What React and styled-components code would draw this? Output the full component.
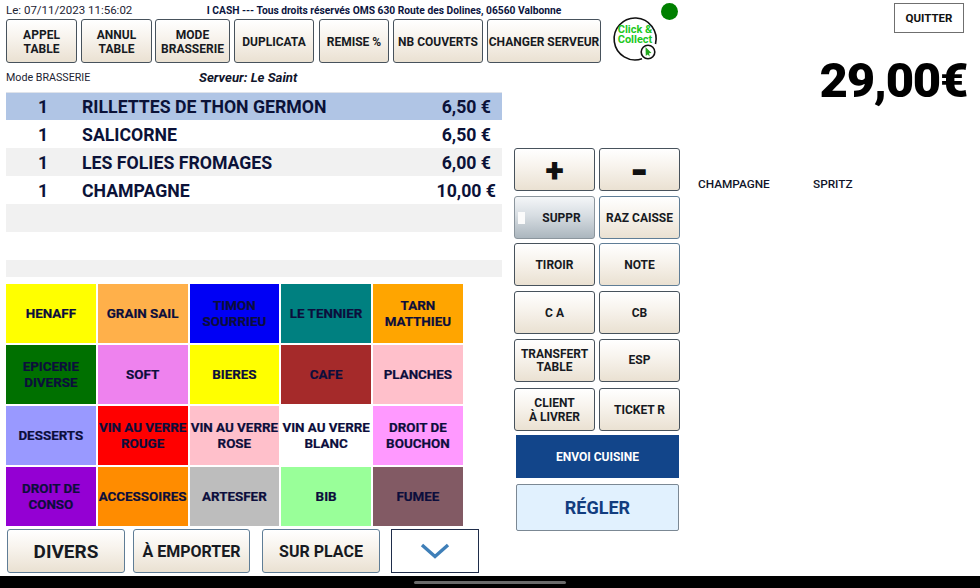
import React from 'react';
import styled, { createGlobalStyle } from 'styled-components';

const Global = createGlobalStyle`
  html, body { margin: 0; padding: 0; background: #fff; }
  * { box-sizing: border-box; }
  body { font-family: Roboto, "Liberation Sans", sans-serif; color: #0b1033; }
`;

const Page = styled.div`
  width: 980px; height: 588px; display: flex; flex-direction: column; overflow: hidden; background: #fff;
`;
const Screen = styled.div`
  height: 576px; display: flex;
`;
const Main = styled.div`
  width: 690px; display: flex; flex-direction: column;
`;
const Head = styled.div`
  height: 19px; display: flex; align-items: center; padding-left: 6px;
`;
const Stamp = styled.div`
  width: 200px; font-size: 11.5px; color: #1c2333;
`;
const Legal = styled.div`
  width: 356px; text-align: center; font-size: 10.25px; font-weight: 700; color: #0b1440; padding-top: 1px; white-space: nowrap;
`;
const Dot = styled.div`
  width: 17px; height: 17px; border-radius: 50%; background: #008000; margin-left: 99px; margin-top: 4px;
`;
const Tools = styled.div`
  height: 44px; display: flex; padding-left: 6px; align-items: flex-start;
`;
const Btn = styled.button`
  display: flex; align-items: center; justify-content: center; text-align: center; padding: ${p => p.$pt || 0}px 0 0;
  font-family: Roboto, sans-serif; font-weight: 700; color: #171a22; line-height: 13.5px;
  font-size: ${p => p.$fs || 12}px;
  width: ${p => p.$w}px; height: ${p => p.$h || 44}px;
  margin-right: ${p => p.$mr || 0}px;
  border: 1.5px solid ${p => p.$edge || '#47525c'}; border-radius: 3px;
  background: linear-gradient(180deg, #ffffff 0%, #f8f4ee 40%, #eae1d2 100%);
  white-space: pre-line; flex: none;
`;
const Symbol = styled(Btn)`
  font-weight: 900; color: #111;
`;
const Logo = styled.svg`
  width: 46px; height: 48px; margin-left: 11px; margin-top: -4px; flex: none; overflow: visible;
`;
const ModeRow = styled.div`
  height: 29px; display: flex; align-items: center; padding: 0 0 0 6px;
`;
const ModeText = styled.div`
  width: 193px; font-size: 10.7px; color: #1c2333;
`;
const Server = styled.div`
  font-size: 13.2px; font-weight: 700; font-style: italic; color: #10142a;
`;
const Body = styled.div`
  flex: 1; display: flex; min-height: 0;
`;
const Left = styled.div`
  width: 508px; padding-left: 6px; display: flex; flex-direction: column;
`;
const List = styled.div`
  width: 496px; height: 185px; display: flex; flex-direction: column; overflow: hidden;
`;
const Row = styled.div`
  height: ${p => p.$h || 28}px; flex: none; display: flex; align-items: center; background: ${p => p.$bg};
  padding-top: ${p => p.$sel ? 1 : 2}px;
  font-size: 17.7px; font-weight: 700; color: #0b1238; border-top: ${p => p.$sel ? '1px solid #dfe3ea' : '0'};
`;
const Qty = styled.div` width: 76px; padding-left: 32px; `;
const Name = styled.div` flex: 1; `;
const Price = styled.div` padding-right: ${p => p.$pr}px; `;
const Tiles = styled.div`
  margin-top: 7px; display: grid; grid-template-columns: repeat(5, 89.75px); grid-auto-rows: 59px; gap: 2px;
`;
const Tile = styled.div`
  background: ${p => p.$bg}; display: flex; align-items: center; justify-content: center; text-align: center;
  font-size: 13.4px; font-weight: 700; line-height: 16px; color: #0c0e3c; white-space: pre;
  -webkit-text-stroke: 0.2px #0c0e3c;
`;
const Bottom = styled.div`
  margin-top: 3px; display: flex; padding-left: 1px;
`;
const Arrow = styled.button`
  width: 88px; height: 44px; margin-left: 11px; border: 1px solid #1f2d4a; background: #fff; padding: 0;
  display: flex; align-items: center; justify-content: center;
`;
const Mid = styled.div`
  margin: 56px 0 0 6px; width: 170px; display: flex; flex-direction: column;
`;
const Pair = styled.div`
  display: flex; gap: 4px; margin-bottom: ${p => p.$mb}px;
`;
const Suppr = styled(Btn)`
  position: relative; padding-left: 14px; background: linear-gradient(180deg, #f4f6f8 0%, #d7dde2 45%, #abb6be 100%); border-color: #8b959d;
`;
const Chip = styled.span`
  position: absolute; left: 3px; top: 15px; width: 7px; height: 12px; background: #fbfbfb;
`;
const Send = styled.div`
  margin: 0 0 6px 2px; width: 163px; height: 43px; background: #12458a; color: #fff; font-size: 12px; font-weight: 700;
  display: flex; align-items: center; justify-content: center;
`;
const Pay = styled.div`
  margin-left: 2px; width: 163px; height: 47px; background: #e1f1fe; border: 1px solid #7b8894; border-radius: 2px;
  color: #123d7f; font-size: 18px; font-weight: 700; display: flex; align-items: center; justify-content: center;
`;
const Side = styled.div`
  flex: 1; display: flex; flex-direction: column; align-items: flex-end; padding: 3px 16px 0 0;
`;
const Quit = styled.button`
  width: 70px; height: 30px; background: #fff; border: 1px solid #6f6f6f; font-family: Roboto, sans-serif; font-size: 11.5px; font-weight: 700; color: #111; padding: 0;
`;
const Total = styled.div`
  margin-top: 16px; margin-right: -3px; font-size: 49px; font-weight: 900; line-height: 64px; color: #000; letter-spacing: -1.3px;
`;
const Favs = styled.div`
  margin-top: 64px; align-self: flex-start; display: flex; padding-left: 8px; font-size: 11.8px; font-weight: 500; color: #10142a;
`;
const Fav = styled.div` width: 115px; `;
const Nav = styled.div`
  height: 12px; background: #000; display: flex; justify-content: center; padding-top: 5px;
`;
const Handle = styled.div`
  width: 152px; height: 3px; background: #6b6b6b; border-radius: 2px;
`;

const rows = [
  ['RILLETTES DE THON GERMON', '6,50 €', '#b0c5e5', 11],
  ['SALICORNE', '6,50 €', '#ffffff', 11],
  ['LES FOLIES FROMAGES', '6,00 €', '#f1f1f1', 11],
  ['CHAMPAGNE', '10,00 €', '#ffffff', 6],
];
const tiles = [
  ['HENAFF', '#ffff00'], ['GRAIN SAIL', '#ffb04a'], ['TIMON\nSOURRIEU', '#0000f5'], ['LE TENNIER', '#008080'], ['TARN\nMATTHIEU', '#ffa500'],
  ['EPICERIE\nDIVERSE', '#007000'], ['SOFT', '#ee82ee'], ['BIERES', '#ffff00'], ['CAFE', '#a52a2a'], ['PLANCHES', '#ffc0cb'],
  ['DESSERTS', '#9999ff'], ['VIN AU VERRE\nROUGE', '#ff0000'], ['VIN AU VERRE\nROSE', '#ffc0cb'], ['VIN AU VERRE\nBLANC', '#ffffff'], ['DROIT DE\nBOUCHON', '#ff99ff'],
  ['DROIT DE\nCONSO', '#9400d3'], ['ACCESSOIRES', '#ff8c00'], ['ARTESFER', '#bdbdbd'], ['BIB', '#99ff99'], ['FUMEE', '#825a64'],
];

export default function App() {
  return (
    <Page>
      <Global />
      <Screen>
        <Main>
          <Head>
            <Stamp>Le: 07/11/2023 11:56:02</Stamp>
            <Legal>I CASH --- Tous droits réservés OMS 630 Route des Dolines, 06560 Valbonne</Legal>
            <Dot />
          </Head>
          <Tools>
            <Btn $pt={3} $w={71} $mr={4}>{'APPEL\nTABLE'}</Btn>
            <Btn $pt={3} $w={71} $mr={3}>{'ANNUL\nTABLE'}</Btn>
            <Btn $pt={3} $w={75} $mr={4}>{'MODE\nBRASSERIE'}</Btn>
            <Btn $pt={3} $w={80} $mr={5}>DUPLICATA</Btn>
            <Btn $pt={3} $w={70} $mr={4}>REMISE %</Btn>
            <Btn $pt={3} $w={90} $mr={4}>NB COUVERTS</Btn>
            <Btn $pt={3} $w={114}>CHANGER SERVEUR</Btn>
            <Logo viewBox="0 0 46 48">
              <path d="M30 43.8 A21 21 0 1 1 43.5 29" fill="none" stroke="#111" strokeWidth="1.6" />
              <text textAnchor="middle" fontFamily="Roboto, sans-serif" fontWeight="700" fontSize="11" fill="#22c81e">
                <tspan x="23" y="18">Click &amp;</tspan>
                <tspan x="23" y="27.6">Collect</tspan>
              </text>
              <circle cx="36" cy="37" r="6.8" fill="#fff" stroke="#111" strokeWidth="1.6" />
              <path d="M33.5 32 L39.5 38 L37 38.2 L37.8 41.5 L35.5 39.6 L33.8 41 Z" fill="#22a81e" />
            </Logo>
          </Tools>
          <ModeRow>
            <ModeText>Mode BRASSERIE</ModeText>
            <Server>Serveur: Le Saint</Server>
          </ModeRow>
          <Body>
            <Left>
              <List>
                {rows.map(([n, p, bg, pr], i) => (
                  <Row key={n} $bg={bg} $sel={i === 0}>
                    <Qty>1</Qty>
                    <Name>{n}</Name>
                    <Price $pr={pr}>{p}</Price>
                  </Row>
                ))}
                <Row $bg="#f1f1f1" />
                <Row $bg="#fff" />
                <Row $bg="#f1f1f1" $h={17} />
              </List>
              <Tiles>
                {tiles.map(([t, c]) => <Tile key={t} $bg={c}>{t}</Tile>)}
              </Tiles>
              <Bottom>
                <Btn $pt={2} $w={118} $fs={19} $mr={8} $edge="#5f7d96">DIVERS</Btn>
                <Btn $pt={2} $w={117} $fs={16} $mr={12} $edge="#5f7d96">À EMPORTER</Btn>
                <Btn $pt={2} $w={118} $fs={16} $edge="#5f7d96">SUR PLACE</Btn>
                <Arrow aria-label="Plus">
                  <svg width="30" height="16" viewBox="0 0 30 16">
                    <path d="M2 2 L15 13.5 L28 2" fill="none" stroke="#3f7fb8" strokeWidth="3.4" />
                  </svg>
                </Arrow>
              </Bottom>
            </Left>
            <Mid>
              <Pair $mb={5}>
                <Symbol $pt={2} $w={81} $h={43} $fs={34}>+</Symbol>
                <Symbol $pt={4} $w={81} $h={43} $fs={44}>-</Symbol>
              </Pair>
              <Pair $mb={4}>
                <Suppr $pt={2} $w={81} $h={43}><Chip />SUPPR</Suppr>
                <Btn $pt={2} $w={81} $h={43} $edge="#5f7d96">RAZ CAISSE</Btn>
              </Pair>
              <Pair $mb={5}>
                <Btn $pt={2} $w={81} $h={43}>TIROIR</Btn>
                <Btn $pt={2} $w={81} $h={43} $edge="#5f7d96">NOTE</Btn>
              </Pair>
              <Pair $mb={5}>
                <Btn $pt={2} $w={81} $h={43}>C A</Btn>
                <Btn $pt={2} $w={81} $h={43}>CB</Btn>
              </Pair>
              <Pair $mb={6}>
                <Btn $pt={1} $w={81} $h={43}>{'TRANSFERT\nTABLE'}</Btn>
                <Btn $pt={1} $w={81} $h={43}>ESP</Btn>
              </Pair>
              <Pair $mb={4}>
                <Btn $pt={2} $w={81} $h={43}>{'CLIENT\nÀ LIVRER'}</Btn>
                <Btn $pt={2} $w={81} $h={43}>TICKET R</Btn>
              </Pair>
              <Send>ENVOI CUISINE</Send>
              <Pay>RÉGLER</Pay>
            </Mid>
          </Body>
        </Main>
        <Side>
          <Quit>QUITTER</Quit>
          <Total>29,00€</Total>
          <Favs>
            <Fav>CHAMPAGNE</Fav>
            <Fav>SPRITZ</Fav>
          </Favs>
        </Side>
      </Screen>
      <Nav><Handle /></Nav>
    </Page>
  );
}
